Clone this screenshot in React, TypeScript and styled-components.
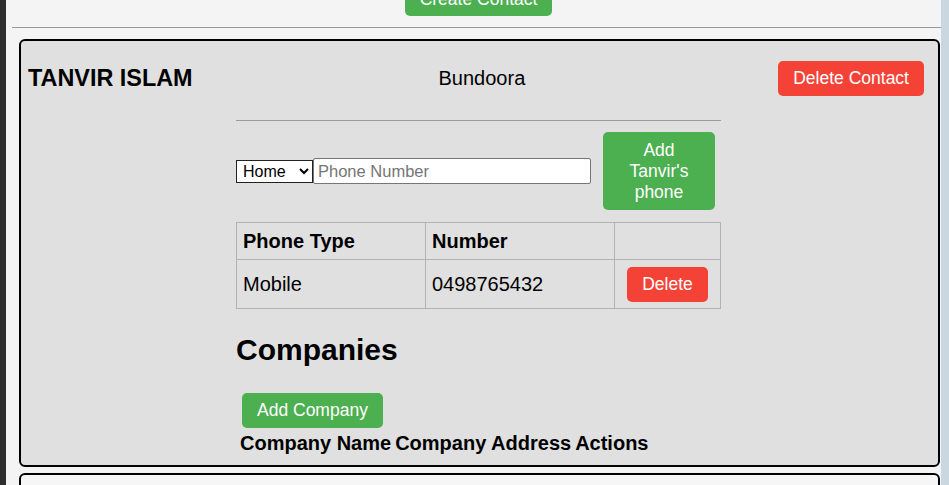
import React from "react";
import styled, { createGlobalStyle } from "styled-components";

const GlobalStyle = createGlobalStyle`
  html, body { margin: 0; padding: 0; }
  body {
    background: #f4f4f4;
    font-family: "Liberation Sans", Arial, sans-serif;
    color: #000;
    overflow: hidden;
  }
`;

const Frame = styled.div`
  display: flex;
  min-height: 100vh;
`;

const LeftEdge = styled.div`
  width: 6px;
  flex: none;
  background: #2e2e2e;
`;

const ScrollStrip = styled.div`
  position: fixed;
  top: 0;
  right: 0;
  bottom: 0;
  width: 8px;
  background: #cbd7e0;
`;

const Main = styled.main`
  flex: 1;
  padding: 0 6px;
  margin-top: -19px;
  display: flex;
  flex-direction: column;
`;

const TopBar = styled.div`
  display: flex;
  justify-content: center;
  padding-left: 2px;
`;

const Button = styled.button<{ $tone: "green" | "red" }>`
  background: ${(p) => (p.$tone === "green" ? "#4caf50" : "#f44336")};
  color: #fff;
  border: none;
  border-radius: 5px;
  font-family: "Liberation Sans", Arial, sans-serif;
  font-size: 17.5px;
  line-height: 20px;
  padding: 7.5px 15px;
  cursor: pointer;
  flex: none;
`;

const Rule = styled.hr<{ $gap: number }>`
  border: none;
  border-top: 1px solid #9a9a9a;
  margin: ${(p) => p.$gap}px 0 0;
  height: 0;
`;

const Card = styled.section<{ $filled?: boolean }>`
  border: 2px solid #000;
  border-radius: 6px;
  background: ${(p) => (p.$filled ? "#e0e0e0" : "#f6f6f6")};
  margin: 0 3px 0 7px;
  padding: 0 0 7px;
`;

const FirstCard = styled(Card)`
  margin-top: 11px;
`;

const NextCard = styled(Card)`
  margin-top: 6px;
  height: 40px;
`;

const CardHeader = styled.header`
  display: flex;
  align-items: center;
  justify-content: space-between;
  height: 74px;
  padding: 0 14px 0 7px;
`;

const Name = styled.h3`
  margin: 0;
  font-size: 23.4px;
  font-weight: bold;
  line-height: 27px;
`;

const City = styled.div`
  font-size: 20px;
  line-height: 23px;
  margin-left: -7px;
`;

const Section = styled.div`
  width: 485px;
  margin: 0 0 0 215px;
`;

const PhoneForm = styled.form`
  display: flex;
  align-items: center;
  margin-top: 11px;
`;

const TypeSelect = styled.select`
  width: 77px;
  height: 23px;
  font-family: "Liberation Sans", Arial, sans-serif;
  font-size: 16px;
  border: 1px solid #222;
  border-radius: 0;
  background: #fff;
  color: #000;
  padding: 0 0 0 2px;
  box-sizing: border-box;
`;

const PhoneInput = styled.input`
  width: 278px;
  height: 26px;
  box-sizing: border-box;
  border: 1px solid #767676;
  border-radius: 2px;
  font-family: "Liberation Sans", Arial, sans-serif;
  font-size: 16.5px;
  padding: 0 4px;
  background: #fff;
  &::placeholder { color: #757575; }
`;

const AddPhoneButton = styled(Button)`
  width: 112px;
  margin-left: 12px;
  padding: 7.5px 12px;
  line-height: 21px;
`;

const PhoneTable = styled.table`
  margin-top: 12px;
  width: 485px;
  border-collapse: collapse;
  font-size: 20px;
`;

const HeadCell = styled.th<{ $w?: number }>`
  border: 1px solid #b2b2b2;
  text-align: left;
  padding: 6.5px 6px;
  line-height: 23px;
  font-weight: bold;
  width: ${(p) => (p.$w ? `${p.$w}px` : "auto")};
`;

const Cell = styled.td<{ $center?: boolean }>`
  border: 1px solid #b2b2b2;
  padding: 6.5px 6px;
  line-height: 23px;
  text-align: ${(p) => (p.$center ? "center" : "left")};
  vertical-align: middle;
`;

const SmallButton = styled(Button)`
  display: inline-block;
  vertical-align: middle;
`;

const Heading = styled.h2`
  font-size: 30px;
  line-height: 34.5px;
  font-weight: bold;
  margin: 24px 0 25px;
`;

const AddCompanyButton = styled(Button)`
  margin-left: 6px;
  display: block;
`;

const CompanyTable = styled.table`
  font-size: 20px;
  border-spacing: 2px;
  margin: 1px 0 0 1px;
`;

const CompanyHead = styled.th`
  padding: 1px;
  line-height: 23px;
  font-weight: bold;
`;

export default function App() {
  return (
    <>
      <GlobalStyle />
      <Frame>
        <LeftEdge />
        <Main>
          <TopBar>
            <Button $tone="green">Create Contact</Button>
          </TopBar>
          <Rule $gap={11} />
          <FirstCard $filled>
            <CardHeader>
              <Name>TANVIR ISLAM</Name>
              <City>Bundoora</City>
              <Button $tone="red">Delete Contact</Button>
            </CardHeader>
            <Section>
              <Rule $gap={5} />
              <PhoneForm onSubmit={(e) => e.preventDefault()}>
                <TypeSelect defaultValue="Home">
                  <option>Home</option>
                  <option>Mobile</option>
                  <option>Work</option>
                </TypeSelect>
                <PhoneInput placeholder="Phone Number" />
                <AddPhoneButton $tone="green" type="submit">
                  Add Tanvir's phone
                </AddPhoneButton>
              </PhoneForm>
              <PhoneTable>
                <thead>
                  <tr>
                    <HeadCell $w={176}>Phone Type</HeadCell>
                    <HeadCell $w={176}>Number</HeadCell>
                    <HeadCell />
                  </tr>
                </thead>
                <tbody>
                  <tr>
                    <Cell>Mobile</Cell>
                    <Cell>0498765432</Cell>
                    <Cell $center>
                      <SmallButton $tone="red">Delete</SmallButton>
                    </Cell>
                  </tr>
                </tbody>
              </PhoneTable>
              <Heading>Companies</Heading>
              <AddCompanyButton $tone="green">Add Company</AddCompanyButton>
              <CompanyTable>
                <thead>
                  <tr>
                    <CompanyHead>Company Name</CompanyHead>
                    <CompanyHead>Company Address</CompanyHead>
                    <CompanyHead>Actions</CompanyHead>
                  </tr>
                </thead>
              </CompanyTable>
            </Section>
          </FirstCard>
          <NextCard />
        </Main>
        <ScrollStrip />
      </Frame>
    </>
  );
}
